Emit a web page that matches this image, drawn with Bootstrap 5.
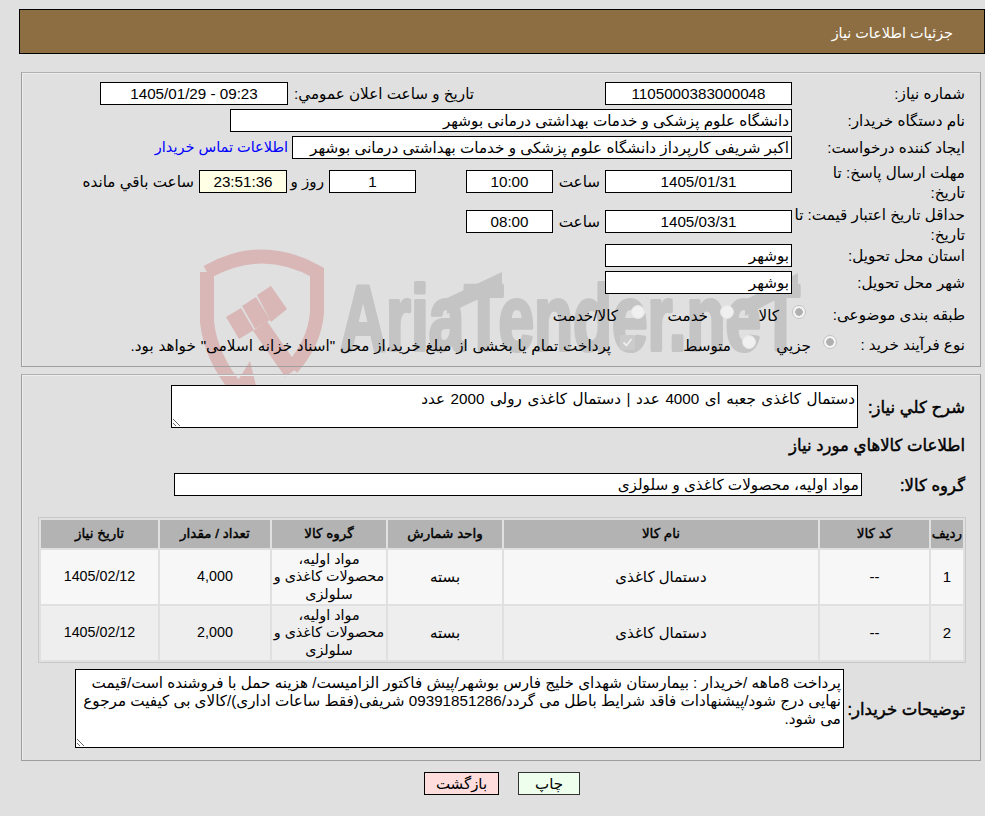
<!DOCTYPE html>
<html lang="fa" dir="rtl">
<head>
<meta charset="utf-8">
<title>جزئیات اطلاعات نیاز</title>
<link href="https://cdn.jsdelivr.net/npm/bootstrap@5.3.0/dist/css/bootstrap.min.css" rel="stylesheet">
<style>
html,body{height:100%;}
body{position:relative;margin:0;background:#e0e0e0;color:#000;font-family:"Liberation Sans","DejaVu Sans",sans-serif;font-size:15.2px;line-height:20px;overflow:hidden;}
.wm{position:absolute;left:0;top:0;width:985px;height:816px;pointer-events:none;}
.wm-text{font-family:"Liberation Sans",sans-serif;font-weight:700;font-size:92px;fill:#c4c4c4;stroke:#c4c4c4;stroke-width:4px;stroke-linejoin:round;}
.topbar{position:relative;height:45px;margin:9px 0 0 19px;padding:13px 31px 0 0;background:#8d6e42;border:1px solid #000;color:#fff;font-size:14.4px;}
.pane{position:relative;margin:0 4px 0 21px;border:1px solid #9e9e9e;border-top-color:#b0b0b0;box-shadow:inset 1px 1px 0 #eee;}
.pane-a{margin-top:18px;height:295px;padding-top:9px;}
.pane-b{margin-top:7px;height:387px;padding-top:10px;}
.frow{display:flex;align-items:flex-start;margin-bottom:4px;}
.flabel{width:188px;flex:none;padding:2px 15px 0 0;}
.fbox{flex:none;height:23px;line-height:21px;padding:0 2px;background:#fff;border:1px solid #000;white-space:nowrap;overflow:hidden;}
.fbox.mid{text-align:center;}
.w187{width:187px}.w188{width:188px}.w562{width:562px}.w500{width:500px}.w87{width:87px}
.txt{flex:none;line-height:23px;white-space:nowrap;}
.blue{color:#00f;text-decoration:none;margin-right:4px;line-height:23px;white-space:nowrap;font-size:14.5px;}
.clock{background:#ffffe6;}
.row-tall{height:42px;margin-bottom:0;}
.row-tall .flabel{padding-top:0;}
.row-tall .fbox,.row-tall .txt{margin-top:7px;}
.row-tall2{height:39px;margin-bottom:0;}
.row-tall2 .flabel{padding-top:0;}
.row-tall2 .fbox,.row-tall2 .txt{margin-top:5px;}
.pick{display:flex;align-items:center;height:26px;margin-bottom:4px;}
.pick .flabel{padding-top:6px;}
.pick .txt{padding-top:6px;}
.dot{flex:none;width:14px;height:14px;border-radius:50%;background:#f0f0f0;border:1px solid #e6e6e6;}
.dot.on{background:radial-gradient(circle,#b0b0b0 0 3.5px,#f4f4f4 4px);border-color:#c4c4c4;}
.tick{flex:none;display:block;width:15px;height:15px;}
.bold-l{font-size:16.5px;-webkit-text-stroke:.45px #000;white-space:nowrap;}
.tbox{display:block;resize:both;background:#fff;border:1px solid #000;border-radius:0;color:#000;font:inherit;outline:none;box-shadow:none;}
.gtable{margin:0;width:928px;table-layout:fixed;border-collapse:separate;border-spacing:2px;border:1px solid #c8c8c8;font-size:15px;}
.table.gtable>:not(caption)>*>*{padding:0 1px;border:0;text-align:center;vertical-align:middle;line-height:17.5px;box-shadow:none;color:#000;white-space:nowrap;}
.table.gtable>thead>tr>th{height:28px;background:#b3b3b3;font-weight:400;font-size:13.5px;-webkit-text-stroke:.4px #000;}
.table.gtable>tbody>.r1>td{background:#f7f7f7;height:54px;}
.table.gtable>tbody>.r2>td{background:#eee;height:54px;}
.table.gtable>tbody>tr>td.tight{font-size:14.3px;}
.act{padding:0;height:23px;line-height:21px;border:1px solid #000;border-radius:0;color:#000;font-size:15px;}
.act-back{width:75px;background:#fdd;}
.act-print{width:62px;background:#efe;border-color:#333;}
.act:hover{color:#000;}
.lbl-date{margin-right:131px;width:181px;}
.lbl-date + .fbox{margin-right:5px;}
.lbl-hour{margin-right:5px;width:47px;}
.day{margin-right:50px;}
.lbl-day{margin-right:5px;width:28px;}
.clock{margin-right:9px;width:88px;}
.lbl-left{margin-right:5px;}
.pick-a{margin-top:5px;}
.pick-a .flabel{width:174px;}
.sp-t1{width:20px;margin-right:13px;}
.sp-a2{margin-right:25px;}
.sp-t2{width:40px;margin-right:12px;}
.sp-a3{margin-right:23px;}
.sp-t3{width:65px;margin-right:13px;}
.pick-b .flabel{width:143px;}
.sq-t1{width:35px;margin-right:12px;}
.sq-a2{margin-right:20px;}
.sq-t2{width:45px;margin-right:11px;}
.sq-a3{margin-right:51px;}
.sq-t3{margin-right:9px;word-spacing:.6px;}
.desc-row{height:43px;}
.lab-desc{width:122px;padding-right:15px;}
.ta-desc{width:687px;height:43px;padding:3px 2px;word-spacing:1.3px;}
.head-goods{margin:7px 15px 0 0;height:34px;line-height:20px;}
.group-row{margin-top:4px;height:23px;}
.lab-group{width:118px;padding-right:15px;}
.w-group{width:688px;}
.table-wrap{margin:21px 14px 0 0;}
.c1{width:32px}.c2{width:109px}.c3{width:314px}.c4{width:114px}.c5{width:114px}.c6{width:110px}.c7{width:117px}
.note-row{margin-top:6px;height:79px;}
.lab-note{width:136px;padding-right:15px;}
.ta-note{width:769px;height:79px;padding:4px 2px;line-height:18px;}
.btn-row{gap:19px;margin-top:11px;padding-left:19px;}
</style>
</head>
<body>
<svg class="wm" viewBox="0 0 985 816" aria-hidden="true">
  <g fill="none" stroke="#d9b7b7" stroke-width="14">
    <path d="M207 272Q262 241 317 272L317 312Q315 342 292 368"/>
    <path d="M207 272L207 322Q211 358 238 390"/>
    <path stroke-width="17" d="M260 326L292 372"/>
  </g>
  <g fill="#d9b7b7">
    <polygon points="226,317 241,308 254,330 239,339"/>
    <polygon points="242,306 256,297 270,320 255,329"/>
    <polygon points="257,295 271,286 287,309 271,322"/>
    <polygon points="250,361 257,390 232,390"/>
  </g>
  <text class="wm-text" x="340" y="350" textLength="460" lengthAdjust="spacingAndGlyphs" direction="ltr">AriaTender.neT</text>
  <g fill="#c4c4c4">
    <polygon points="447,298 502,272 502,288 447,314"/>
    <polygon points="745,300 798,273 798,288 745,316"/>
  </g>
</svg>

<div class="topbar">جزئیات اطلاعات نیاز</div>

<div class="pane pane-a">
  <div class="frow">
    <div class="flabel">شماره نياز:</div>
    <div class="fbox mid w187">1105000383000048</div>
    <div class="txt lbl-date">تاريخ و ساعت اعلان عمومي:</div>
    <div class="fbox mid w188" dir="ltr">1405/01/29 - 09:23</div>
  </div>
  <div class="frow">
    <div class="flabel">نام دستگاه خريدار:</div>
    <div class="fbox w562">دانشگاه علوم پزشکی و خدمات بهداشتی درمانی بوشهر</div>
  </div>
  <div class="frow">
    <div class="flabel">ايجاد كننده درخواست:</div>
    <div class="fbox w500">اکبر شریفی کارپرداز دانشگاه علوم پزشکی و خدمات بهداشتی درمانی بوشهر</div>
    <a class="blue" href="#">اطلاعات تماس خريدار</a>
  </div>
  <div class="frow row-tall">
    <div class="flabel">مهلت ارسال پاسخ: تا<br>تاريخ:</div>
    <div class="fbox mid w187">1405/01/31</div>
    <div class="txt lbl-hour">ساعت</div>
    <div class="fbox mid w87">10:00</div>
    <div class="fbox mid w87 day">1</div>
    <div class="txt lbl-day">روز و</div>
    <div class="fbox mid w87 clock">23:51:36</div>
    <div class="txt lbl-left">ساعت باقي مانده</div>
  </div>
  <div class="frow row-tall2">
    <div class="flabel">حداقل تاریخ اعتبار قیمت: تا<br>تاریخ:</div>
    <div class="fbox mid w187">1405/03/31</div>
    <div class="txt lbl-hour">ساعت</div>
    <div class="fbox mid w87">08:00</div>
  </div>
  <div class="frow">
    <div class="flabel">استان محل تحویل:</div>
    <div class="fbox w187">بوشهر</div>
  </div>
  <div class="frow">
    <div class="flabel">شهر محل تحویل:</div>
    <div class="fbox w187">بوشهر</div>
  </div>
  <div class="pick pick-a">
    <div class="flabel">طبقه بندی موضوعی:</div>
    <span class="dot on"></span><span class="txt sp-t1">کالا</span>
    <span class="dot sp-a2"></span><span class="txt sp-t2">خدمت</span>
    <span class="dot sp-a3"></span><span class="txt sp-t3">کالا/خدمت</span>
  </div>
  <div class="pick pick-b">
    <div class="flabel">نوع فرآیند خرید :</div>
    <span class="dot on"></span><span class="txt sq-t1">جزيي</span>
    <span class="dot sq-a2"></span><span class="txt sq-t2">متوسط</span>
    <svg class="tick sq-a3" viewBox="0 0 15 15" aria-hidden="true"><rect width="15" height="15" rx="1" fill="#cbcbcb"/><path d="M3.5 7.5l3 3 5-6.5" fill="none" stroke="#eee" stroke-width="1.8"/></svg><span class="txt sq-t3">پرداخت تمام یا بخشی از مبلغ خرید،از محل "اسناد خزانه اسلامی" خواهد بود.</span>
  </div>
</div>

<div class="pane pane-b">
  <div class="d-flex align-items-center desc-row">
    <div class="bold-l lab-desc">شرح کلي نياز:</div>
    <textarea class="tbox ta-desc" readonly>دستمال کاغذی جعبه ای 4000 عدد | دستمال کاغذی رولی 2000 عدد</textarea>
  </div>
  <div class="bold-l head-goods">اطلاعات کالاهاي مورد نياز</div>
  <div class="d-flex align-items-center group-row">
    <div class="bold-l lab-group">گروه کالا:</div>
    <div class="fbox w-group">مواد اولیه، محصولات کاغذی و سلولزی</div>
  </div>
  <div class="table-wrap">
    <table class="table gtable">
      <colgroup><col class="c1"><col class="c2"><col class="c3"><col class="c4"><col class="c5"><col class="c6"><col class="c7"></colgroup>
      <thead>
        <tr><th>ردیف</th><th>کد کالا</th><th>نام کالا</th><th>واحد شمارش</th><th>گروه کالا</th><th>تعداد / مقدار</th><th>تاریخ نیاز</th></tr>
      </thead>
      <tbody>
        <tr class="r1"><td>1</td><td>--</td><td>دستمال کاغذی</td><td>بسته</td><td class="tight">مواد اولیه،<br>محصولات کاغذی و<br>سلولزی</td><td class="tight">4,000</td><td class="tight">1405/02/12</td></tr>
        <tr class="r2"><td>2</td><td>--</td><td>دستمال کاغذی</td><td>بسته</td><td class="tight">مواد اولیه،<br>محصولات کاغذی و<br>سلولزی</td><td class="tight">2,000</td><td class="tight">1405/02/12</td></tr>
      </tbody>
    </table>
  </div>
  <div class="d-flex align-items-center note-row">
    <div class="bold-l lab-note">توضیحات خریدار:</div>
    <textarea class="tbox ta-note" readonly>پرداخت 8ماهه /خریدار : بیمارستان شهدای خلیج فارس بوشهر/پیش فاکتور الزامیست/ هزینه حمل با فروشنده است/قیمت نهایی درج شود/پیشنهادات فاقد شرایط باطل می گردد/09391851286 شریفی(فقط ساعات اداری)/کالای بی کیفیت مرجوع می شود.</textarea>
  </div>
</div>

<div class="d-flex justify-content-center btn-row">
  <button type="button" class="btn act act-print">چاپ</button>
  <button type="button" class="btn act act-back">بازگشت</button>
</div>
</body>
</html>
